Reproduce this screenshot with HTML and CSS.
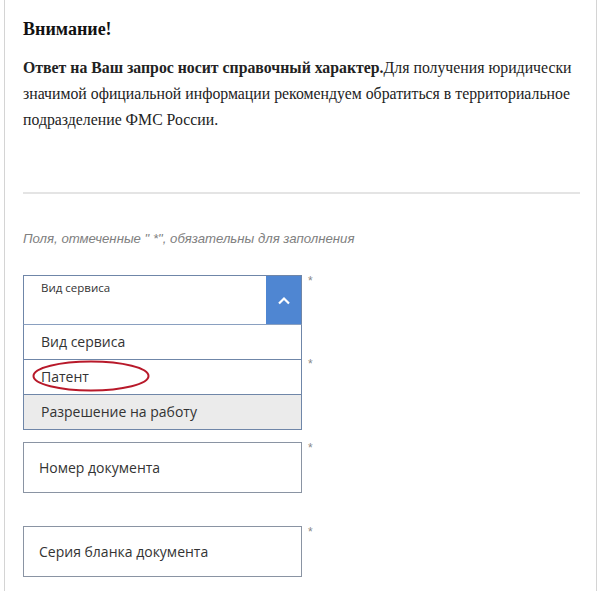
FILE: index.html
```html
<!DOCTYPE html>
<html>
<head>
    <title>Проверка документа</title>
    <link rel="stylesheet" href="styles.css">
</head>
<body>
    <div class="page">
        <h2>Внимание!</h2>
        <p class="notice"><b>Ответ на Ваш запрос носит справочный характер.</b>Для получения юридически значимой официальной информации рекомендуем обратиться в территориальное подразделение ФМС России.</p>

        <hr>

        <p class="required-note">Поля, отмеченные " *", обязательны для заполнения</p>

        <div class="field">
            <div class="select open">
                <div class="select-head">
                    <span class="select-label">Вид сервиса</span>
                    <span class="select-btn">
                        <svg width="14" height="9" viewBox="0 0 14 9"><path d="M2 7.5 L7 2.5 L12 7.5" fill="none" stroke="#fff" stroke-width="2.2"/></svg>
                    </span>
                </div>
                <ul class="select-list">
                    <li>Вид сервиса</li>
                    <li class="marked">Патент
                        <svg class="ring" width="120" height="34" viewBox="0 0 120 34"><ellipse cx="60" cy="17" rx="57.5" ry="14.5" fill="none" stroke="#b8192a" stroke-width="2"/></svg>
                    </li>
                    <li class="active">Разрешение на работу</li>
                </ul>
            </div>
            <span class="star">*</span>
        </div>

        <div class="field">
            <div class="input">Дата выдачи</div>
            <span class="star">*</span>
        </div>

        <div class="field">
            <div class="input">Номер документа</div>
            <span class="star">*</span>
        </div>

        <div class="field">
            <div class="input">Серия бланка документа</div>
            <span class="star">*</span>
        </div>
    </div>
</body>
</html>
```

FILE: styles.css
```css
body {
    margin: 0;
    background: #fff;
    font-family: "Liberation Serif", "Times New Roman", serif;
    color: #111;
}

.page {
    margin: 0 3px 0 4px;
    min-height: 591px;
    padding: 18px 16px 0 18px;
    border-left: 1px solid #d4d4d4;
    border-right: 1px solid #d4d4d4;
}

h2 {
    margin: 0;
    font-size: 18px;
    line-height: 22px;
}

.notice {
    margin: 15px 0 0;
    font-size: 15.8px;
    line-height: 26px;
    color: #222;
}

hr {
    margin: 59px 0 0;
    border: none;
    border-top: 2px solid #e4e4e4;
}

.required-note {
    margin: 37px 0 0;
    font-family: "Liberation Sans", Arial, sans-serif;
    font-style: italic;
    font-size: 13.2px;
    color: #808080;
}

.field {
    display: flex;
    align-items: flex-start;
    margin-top: 33px;
}

.field:first-of-type {
    margin-top: 29px;
}

.star {
    margin-left: 6px;
    font-family: "Liberation Sans", Arial, sans-serif;
    font-size: 12px;
    line-height: 12px;
    color: #888;
}

.input,
.select-label,
.select-list li {
    font-family: "Open Sans", Arial, sans-serif;
    color: #333;
}

.input {
    width: 262px;
    height: 49px;
    padding-left: 15px;
    border: 1px solid #8a94a3;
    font-size: 14px;
    line-height: 49px;
}

.select {
    position: relative;
    width: 279px;
    height: 50px;
}

.select-head {
    display: flex;
    height: 49px;
    border: 1px solid #6f86a8;
    border-bottom: none;
}

.select-label {
    flex: 1;
    padding: 4px 0 0 17px;
    font-size: 11.5px;
}

.select-btn {
    display: flex;
    align-items: center;
    justify-content: center;
    width: 35px;
    background: #4f86d2;
}

.select-list {
    position: absolute;
    left: 0;
    top: 49px;
    z-index: 2;
    width: 277px;
    margin: 0;
    padding: 0;
    list-style: none;
    background: #fff;
    border: 1px solid #6f86a8;
    border-top-color: #8aa0c0;
}

.select-list li {
    position: relative;
    height: 34px;
    padding-left: 17px;
    border-top: 1px solid #6f86a8;
    font-size: 14px;
    line-height: 34px;
}

.select-list li:first-child {
    border-top: none;
}

.select-list li.active {
    background: #ebebeb;
}

.ring {
    position: absolute;
    left: 7px;
    top: -1px;
}
```
